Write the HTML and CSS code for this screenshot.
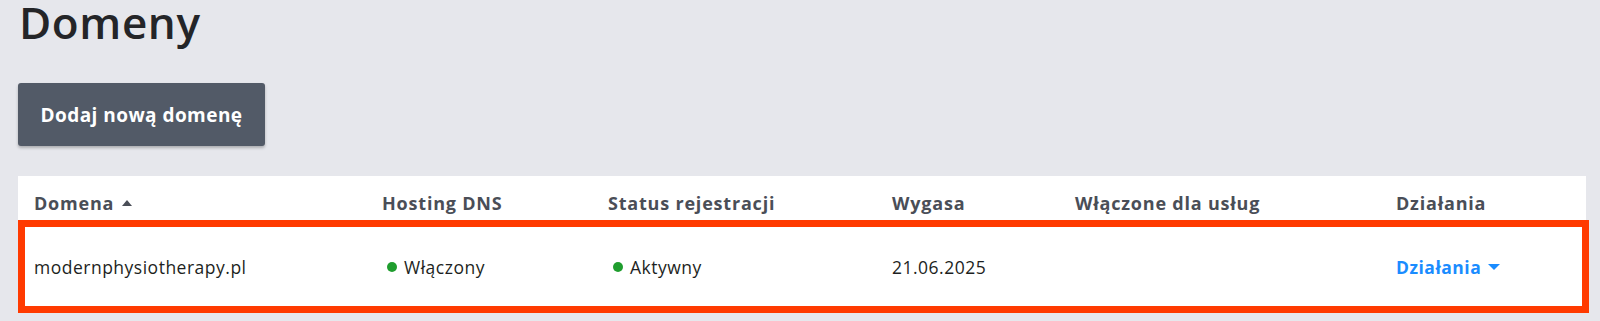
FILE: index.html
```html
<!DOCTYPE html>
<html lang="pl">
<head>
<meta charset="utf-8">
<title>Domeny</title>
<link rel="stylesheet" href="styles.css">
</head>
<body>
<div class="page">
  <h1 class="title">Domeny</h1>
  <button class="btn-add">Dodaj nową domenę</button>
  <div class="card">
    <div class="grid head">
      <div class="cell">Domena <span class="sort"></span></div>
      <div class="cell">Hosting DNS</div>
      <div class="cell">Status rejestracji</div>
      <div class="cell">Wygasa</div>
      <div class="cell">Włączone dla usług</div>
      <div class="cell">Działania</div>
    </div>
    <div class="grid row">
      <div class="cell">modernphysiotherapy.pl</div>
      <div class="cell"><span class="dot"></span>Włączony</div>
      <div class="cell"><span class="dot"></span>Aktywny</div>
      <div class="cell">21.06.2025</div>
      <div class="cell"></div>
      <div class="cell"><a class="actions" href="#">Działania <span class="caret"></span></a></div>
    </div>
  </div>
</div>
</body>
</html>
```
FILE: styles.css
```css
html, body {
  margin: 0;
  padding: 0;
  background: #e6e7ec;
  font-family: "Open Sans", Lato, sans-serif;
  color: #1d1f22;
}
html {
  height: 321px;
  overflow: hidden;
}
.page {
  padding: 0 0 0 18px;
}
.title {
  margin: 0;
  font-size: 44px;
  font-weight: 600;
  line-height: 44px;
  height: 44px;
  letter-spacing: 0.6px;
  color: #242528;
  padding-left: 1px;
}
.btn-add {
  margin-top: 39px;
  width: 247px;
  height: 63px;
  border: none;
  border-radius: 3px;
  background: #525a67;
  color: #fff;
  font-family: inherit;
  font-weight: 700;
  font-size: 19px;
  letter-spacing: 0.45px;
  box-shadow: 0 2px 3px rgba(0,0,0,0.25);
  padding: 0;
  display: block;
}
.card {
  margin-top: 30px;
  width: 1568px;
  background: #fff;
}
.grid {
  display: grid;
  grid-template-columns: 348px 226px 284px 183px 321px 1fr;
  align-items: center;
}
.head {
  height: 34px;
  padding: 10px 0 0 16px;
  font-weight: 700;
  font-size: 18px;
  letter-spacing: 0.8px;
  color: #4a4e57;
}
.row {
  height: 79px;
  border: 7px solid #ff3a00;
  padding-left: 9px;
  margin-right: -3px;
  font-size: 17.5px;
  letter-spacing: 0.5px;
}
.cell {
  display: flex;
  align-items: center;
  white-space: nowrap;
}
.sort {
  display: inline-block;
  width: 0;
  height: 0;
  margin-left: 8px;
  border-left: 5px solid transparent;
  border-right: 5px solid transparent;
  border-bottom: 6px solid #4a4e57;
}
.dot {
  display: inline-block;
  flex: none;
  width: 10px;
  height: 10px;
  border-radius: 50%;
  background: #1f9d2e;
  margin: 0 7px 0 5px;
}
.actions {
  color: #1a8cff;
  font-weight: 700;
  text-decoration: none;
  display: flex;
  align-items: center;
}
.caret {
  display: inline-block;
  width: 0;
  height: 0;
  margin-left: 7px;
  border-left: 6px solid transparent;
  border-right: 6px solid transparent;
  border-top: 6px solid #1a8cff;
}
```
